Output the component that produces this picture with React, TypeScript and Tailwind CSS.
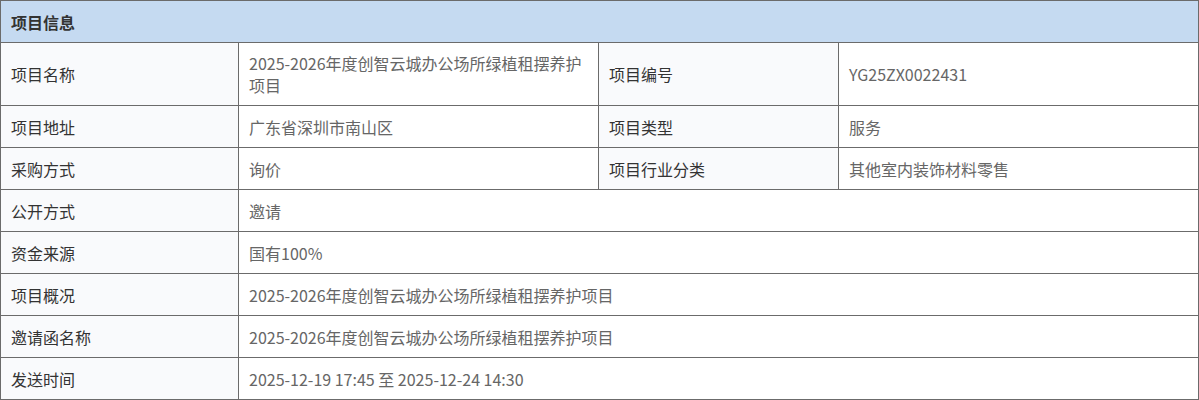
const rows2: [string, string, string, string][] = [
  ["项目名称", "2025-2026年度创智云城办公场所绿植租摆养护项目", "项目编号", "YG25ZX0022431"],
  ["项目地址", "广东省深圳市南山区", "项目类型", "服务"],
  ["采购方式", "询价", "项目行业分类", "其他室内装饰材料零售"],
];

const rows1: [string, string][] = [
  ["公开方式", "邀请"],
  ["资金来源", "国有100%"],
  ["项目概况", "2025-2026年度创智云城办公场所绿植租摆养护项目"],
  ["邀请函名称", "2025-2026年度创智云城办公场所绿植租摆养护项目"],
  ["发送时间", "2025-12-19 17:45 至 2025-12-24 14:30"],
];

const cell = "flex min-h-[42px] items-center border-r border-b border-[#6b6b6b] px-[10px] py-[9px] leading-[22px]";
const label = `${cell} bg-[#f9fafc] text-[#333333]`;
const value = `${cell} bg-white text-[#666666]`;

export default function App() {
  return (
    <div className="w-[1199px] bg-white text-[16px]" style={{ fontFamily: '"Noto Sans CJK SC", "Noto Sans", sans-serif' }}>
      <div className="grid grid-cols-[238px_360px_240px_360px] border-t border-l border-[#6b6b6b]">
        <div className="col-span-4 flex h-[42px] items-center border-r border-b border-[#6b6b6b] bg-[#c5daf1] px-[10px] font-bold text-[#333333]">
          项目信息
        </div>
        {rows2.map(([a, b, c, d]) => (
          <div key={a} className="contents">
            <div className={label}>{a}</div>
            <div className={value}>{b}</div>
            <div className={label}>{c}</div>
            <div className={value}>{d}</div>
          </div>
        ))}
        {rows1.map(([a, b]) => (
          <div key={a} className="contents">
            <div className={label}>{a}</div>
            <div className={`${value} col-span-3`}>{b}</div>
          </div>
        ))}
      </div>
    </div>
  );
}
